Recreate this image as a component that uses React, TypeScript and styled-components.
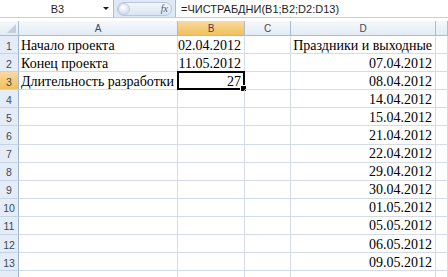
import React from 'react';
import styled, { createGlobalStyle, css } from 'styled-components';

const GlobalStyle = createGlobalStyle`
  html, body {
    margin: 0;
    padding: 0;
    background: #ffffff;
  }
`;

const Sheet = styled.div`
  width: 448px;
  height: 277px;
  overflow: hidden;
  background: #ffffff;
  font-family: 'Liberation Sans', Arial, sans-serif;
`;

const FormulaBar = styled.div`
  display: flex;
  height: 18px;
  background: #dfe8f5;
  border-bottom: 1px solid #c2cfe2;
  box-sizing: border-box;
`;

const NameBox = styled.div`
  width: 114px;
  display: flex;
  align-items: center;
  background: #ffffff;
  border-right: 1px solid #a9bcd8;
  box-sizing: border-box;
  font-size: 11px;
  color: #1e1e1e;
`;

const NameText = styled.span`
  flex: 1;
  text-align: center;
  padding-left: 12px;
`;

const DropArrow = styled.span`
  width: 0;
  height: 0;
  margin-right: 4px;
  border-left: 3px solid transparent;
  border-right: 3px solid transparent;
  border-top: 3px solid #1b1b1b;
`;

const GripZone = styled.div`
  width: 61px;
  display: flex;
  align-items: center;
  padding: 0 3px;
  box-sizing: border-box;
`;

const Pill = styled.div`
  flex: 1;
  height: 14px;
  border-radius: 7px;
  border: 1px solid #b7c6dc;
  background: linear-gradient(#f4f7fb, #d9e3f0);
  display: flex;
  align-items: center;
  justify-content: space-between;
  box-sizing: border-box;
`;

const Knob = styled.span`
  width: 12px;
  height: 12px;
  border-radius: 50%;
  background: radial-gradient(circle at 40% 35%, #ffffff, #c9d5e6);
  border: 1px solid #c0cde0;
  box-sizing: border-box;
`;

const Fx = styled.span`
  font-family: 'Liberation Serif', 'Times New Roman', serif;
  font-style: italic;
  font-size: 10px;
  color: #555f6c;
  margin-right: 3px;
`;

const FormulaInput = styled.div`
  flex: 1;
  display: flex;
  align-items: center;
  padding-left: 5px;
  background: #ffffff;
  border-left: 1px solid #a9bcd8;
  font-size: 11px;
  color: #1e1e1e;
`;

const Grid = styled.div`
  margin-top: 3px;
  display: grid;
  grid-template-columns: 19px 159px 67px 46px 145px 1fr;
  grid-auto-rows: 18.1px;
  grid-template-rows: 15px;
`;

const headerBg = css<{ $active?: boolean }>`
  background: ${p =>
    p.$active
      ? 'linear-gradient(#f9d99f, #f1c05c)'
      : 'linear-gradient(#f6f8fb, #e3ebf5)'};
  color: #3b4a60;
  font-size: 10px;
  display: flex;
  align-items: center;
  justify-content: center;
  box-sizing: border-box;
  border-right: 1px solid #a8bcd6;
  border-bottom: 1px solid #a8bcd6;
`;

const Corner = styled.div`
  ${headerBg};
  position: relative;
  &::after {
    content: '';
    position: absolute;
    right: 2px;
    bottom: 2px;
    border-left: 9px solid transparent;
    border-bottom: 9px solid #c5cfdc;
  }
`;

const ColHead = styled.div<{ $active?: boolean }>`
  ${headerBg};
`;

const RowHead = styled.div<{ $active?: boolean }>`
  ${headerBg};
  background: ${p => (p.$active ? 'linear-gradient(#f9d99f, #f1c05c)' : '#e4ecf7')};
  border-bottom: 1px solid #c5d3e6;
  border-right: 1px solid #9eb6ce;
  font-size: 10.5px;
  padding-top: 2px;
`;

const Cell = styled.div<{ $right?: boolean; $selected?: boolean }>`
  position: relative;
  box-sizing: border-box;
  border-right: 1px solid #d4dbe6;
  border-bottom: 1px solid #d4dbe6;
  font-family: 'Liberation Serif', 'Times New Roman', serif;
  font-size: 14px;
  color: #000000;
  display: flex;
  align-items: center;
  justify-content: ${p => (p.$right ? 'flex-end' : 'flex-start')};
  padding: 2px 3px 0 2px;
  white-space: nowrap;
  ${p =>
    p.$selected &&
    css`
      &::before {
        content: '';
        position: absolute;
        left: -1px;
        top: -1px;
        right: -1px;
        bottom: -1px;
        border: 2px solid #000000;
      }
      &::after {
        content: '';
        position: absolute;
        right: -3px;
        bottom: -3px;
        width: 5px;
        height: 5px;
        background: #000000;
        border: 1px solid #ffffff;
      }
    `}
`;

type Row = { a?: string; b?: string; d?: string };

const rows: Row[] = [
  { a: 'Начало проекта', b: '02.04.2012', d: 'Праздники и выходные' },
  { a: 'Конец проекта', b: '11.05.2012', d: '07.04.2012' },
  { a: 'Длительность разработки', b: '27', d: '08.04.2012' },
  { d: '14.04.2012' },
  { d: '15.04.2012' },
  { d: '21.04.2012' },
  { d: '22.04.2012' },
  { d: '29.04.2012' },
  { d: '30.04.2012' },
  { d: '01.05.2012' },
  { d: '05.05.2012' },
  { d: '06.05.2012' },
  { d: '09.05.2012' },
  {},
];

export default function App() {
  return (
    <Sheet>
      <GlobalStyle />
      <FormulaBar>
        <NameBox>
          <NameText>B3</NameText>
          <DropArrow />
        </NameBox>
        <GripZone>
          <Pill>
            <Knob />
            <Fx>fx</Fx>
          </Pill>
        </GripZone>
        <FormulaInput>=ЧИСТРАБДНИ(B1;B2;D2:D13)</FormulaInput>
      </FormulaBar>
      <Grid>
        <Corner />
        <ColHead>A</ColHead>
        <ColHead $active>B</ColHead>
        <ColHead>C</ColHead>
        <ColHead>D</ColHead>
        <ColHead />
        {rows.map((r, i) => (
          <React.Fragment key={i}>
            <RowHead $active={i === 2}>{i + 1}</RowHead>
            <Cell>{r.a}</Cell>
            <Cell $right $selected={i === 2}>
              {r.b}
            </Cell>
            <Cell />
            <Cell $right>{r.d}</Cell>
            <Cell />
          </React.Fragment>
        ))}
      </Grid>
    </Sheet>
  );
}
